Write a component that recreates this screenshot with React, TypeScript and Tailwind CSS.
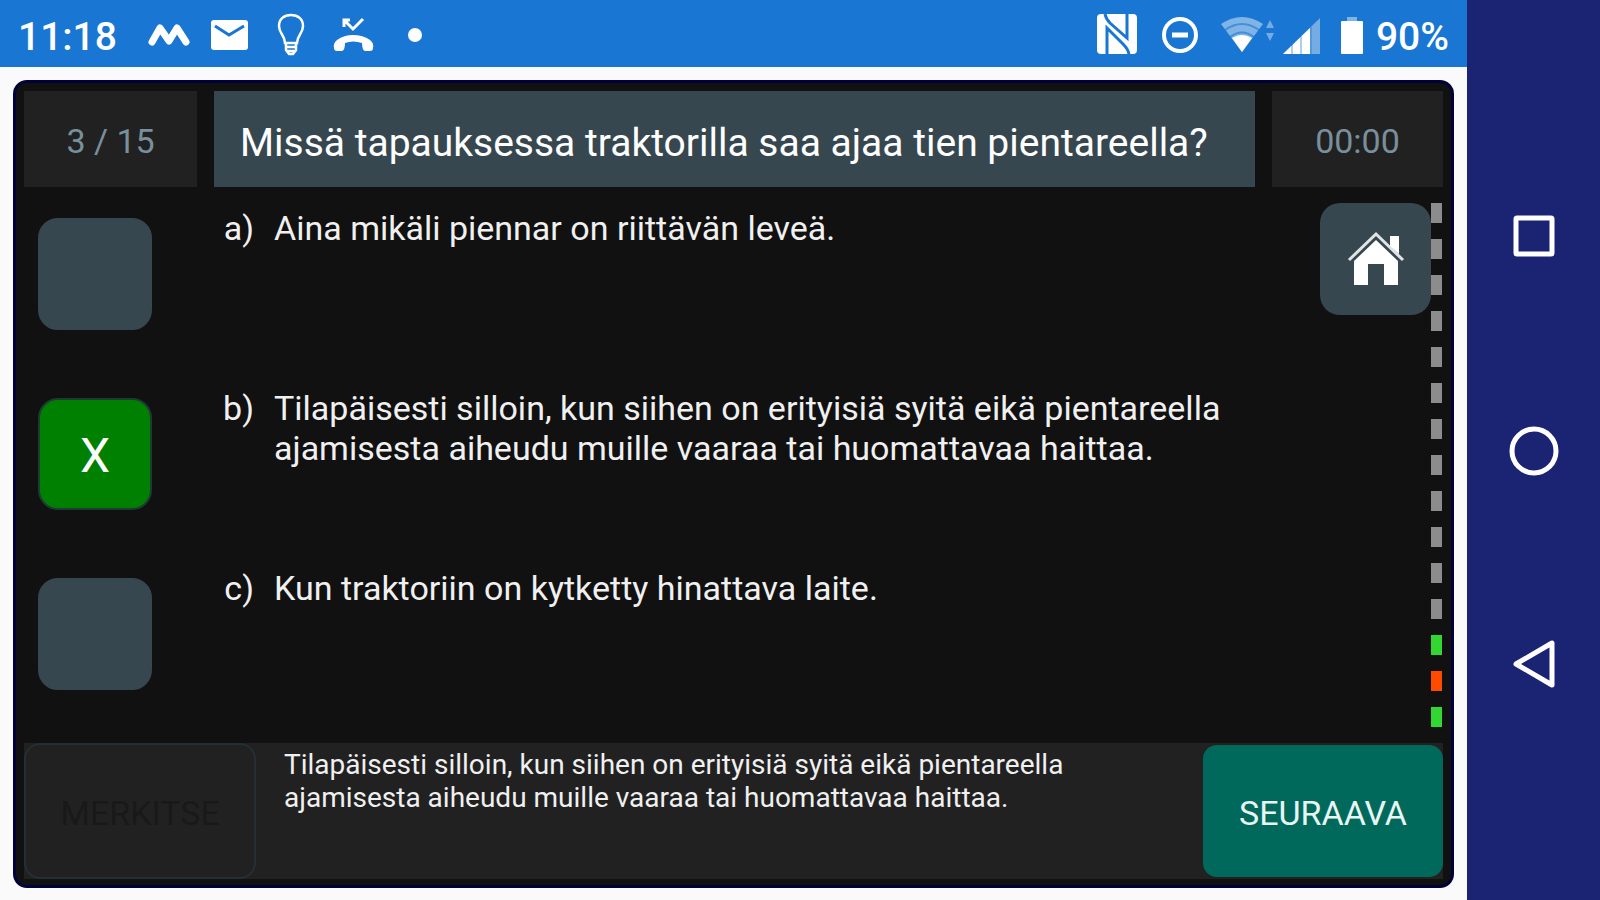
import { useState } from "react";

const QUESTION = "Missä tapauksessa traktorilla saa ajaa tien pientareella?";
const EXPLANATION =
  "Tilapäisesti silloin, kun siihen on erityisiä syitä eikä pientareella ajamisesta aiheudu muille vaaraa tai huomattavaa haittaa.";

const OPTIONS = [
  { key: "a", text: "Aina mikäli piennar on riittävän leveä." },
  {
    key: "b",
    text: "Tilapäisesti silloin, kun siihen on erityisiä syitä eikä pientareella ajamisesta aiheudu muille vaaraa tai huomattavaa haittaa.",
  },
  { key: "c", text: "Kun traktoriin on kytketty hinattava laite." },
];

// first question is at the bottom of the column
const RESULTS = [
  ...Array.from({ length: 12 }, () => "open"),
  "right",
  "wrong",
  "right",
];

const RESULT_COLORS: Record<string, string> = {
  open: "bg-[#8c8c8c]",
  right: "bg-[#32d732]",
  wrong: "bg-[#ff4b00]",
};

const StatusBar = () => (
  <header className="flex h-[67px] items-center justify-between bg-[#1976d2] px-[18px] pt-[2px] text-[39px] leading-[48px] font-medium text-white">
    <div className="flex items-center">
      <span className="w-[120px] pt-1">11:18</span>
      <svg className="w-[61px]" height="48" viewBox="0 0 61 48" fill="none">
        <path
          d="M14 31 L22 17 L31 30 L39 17 L48 31"
          stroke="white"
          strokeWidth="7"
          strokeLinejoin="round"
          strokeLinecap="round"
        />
      </svg>
      <svg className="w-[61px]" height="48" viewBox="0 0 61 48">
        <rect x="12" y="9" width="37" height="30" rx="3" fill="white" />
        <path d="M16 15 L30 24 L45 15" fill="none" stroke="#1976d2" strokeWidth="3" />
      </svg>
      <svg
        className="w-[61px]"
        height="48"
        viewBox="0 0 61 48"
        fill="none"
        stroke="white"
        strokeWidth="2.5"
      >
        <path d="M25 32 C25 24 19 23 19 15 C19 8 24 4 31 4 C38 4 43 8 43 15 C43 23 37 24 37 32 Z" />
        <path d="M26 32 V39 L29 43 H33 L36 39 V32 M26 36 H36 M27 40 H35" />
      </svg>
      <svg className="w-[61px]" height="48" viewBox="0 0 61 48">
        <path
          d="M13 37 Q12 32 16 29 Q23 24 32 24 Q42 24 49 29 Q53 32 52 37 Q52 40 49 40 L44 40 Q41 39 41 32 Q32 29 24 32 Q24 39 21 40 L16 40 Q13 40 13 37 Z"
          fill="white"
        />
        <path d="M23 16 V9 H29 M24 10 L32 18 L42 8" fill="none" stroke="white" strokeWidth="3" />
      </svg>
      <svg className="w-[61px]" height="48" viewBox="0 0 61 48">
        <circle cx="33" cy="24" r="7" fill="white" />
      </svg>
    </div>
    <div className="flex items-center">
      <svg className="w-[63px]" height="48" viewBox="0 0 63 48">
        <rect x="12" y="3" width="40" height="40" rx="4" fill="white" />
        <path
          d="M20 3 Q21 8 25 12 L42 27 V3 M22 43 V17 L38 33 Q43 38 44 43"
          fill="none"
          stroke="#1976d2"
          strokeWidth="3"
        />
      </svg>
      <svg className="w-[63px]" height="48" viewBox="0 0 63 48" fill="none" stroke="white">
        <circle cx="32" cy="24" r="16" strokeWidth="4" />
        <path d="M24 24 H40" strokeWidth="5" />
      </svg>
      <svg className="w-[63px]" height="48" viewBox="0 0 63 48">
        <path d="M10 13 Q31 -1 52 13 L31 41 Z" fill="white" opacity="0.45" />
        <path
          d="M14 19 Q31 7 48 19 M19 26 Q31 17 43 26"
          fill="none"
          stroke="#1976d2"
          strokeWidth="2"
          opacity="0.6"
        />
        <path d="M21 27 Q31 21 41 27 L31 41 Z" fill="white" />
        <path d="M55 17 L59 9 L63 17 Z M55 22 L59 30 L63 22 Z" fill="white" opacity="0.4" />
      </svg>
      <svg className="w-[54px]" height="48" viewBox="0 0 54 48">
        <path d="M9 43 L46 7 V43 Z" fill="white" opacity="0.4" />
        <path d="M9 43 L36 17 V43 Z" fill="white" />
        <path
          d="M18 43 V33 M27 43 V25 M37 43 V16"
          stroke="#1976d2"
          strokeWidth="2"
          opacity="0.35"
        />
      </svg>
      <svg className="w-[48px]" height="48" viewBox="0 0 48 48">
        <path d="M19 6 H29 V10 H19 Z" fill="white" opacity="0.45" />
        <rect x="13" y="10" width="22" height="33" rx="1" fill="white" />
      </svg>
      <span className="pt-1">90%</span>
    </div>
  </header>
);

const NavBar = () => (
  <nav className="flex w-[133px] shrink-0 flex-col items-center justify-center gap-[150px] bg-[#1a2473]">
    <button aria-label="Recent apps" className="size-16">
      <svg viewBox="0 0 64 64" fill="none" stroke="white" strokeWidth="5">
        <rect x="14" y="14" width="36" height="36" rx="1" />
      </svg>
    </button>
    <button aria-label="Home screen" className="size-16">
      <svg viewBox="0 0 64 64" fill="none" stroke="white" strokeWidth="5">
        <circle cx="32" cy="33" r="22" />
      </svg>
    </button>
    <button aria-label="Back" className="size-16">
      <svg viewBox="0 0 64 64" fill="none" stroke="white" strokeWidth="5" strokeLinejoin="round">
        <path d="M14 32 L50 11 V53 Z" />
      </svg>
    </button>
  </nav>
);

const HomeIcon = () => (
  <svg width="60" height="60" viewBox="0 0 60 60" fill="none">
    <path d="M3 33 L30 7 L57 33" stroke="white" strokeOpacity="0.85" strokeWidth="3" />
    <path d="M44 9 H53 V27 L44 19 Z" fill="white" />
    <path d="M8 34 L30 13 L52 34 V58 H38 V37 H22 V58 H8 Z" fill="white" />
  </svg>
);

interface OptionProps {
  label: string;
  text: string;
  checked: boolean;
  onSelect: () => void;
}

const Option = ({ label, text, checked, onSelect }: OptionProps) => (
  <li className="flex">
    <div className="relative mt-[15px] ml-[14px] h-[112px] w-[114px] shrink-0">
      <input
        type="checkbox"
        id={`option-${label}`}
        checked={checked}
        onChange={onSelect}
        className="size-full appearance-none rounded-[20px] border-2 border-[#37474f] bg-[#37474f] checked:border-[#1d3a33] checked:bg-[#008000]"
      />
      {checked ? (
        <span className="pointer-events-none absolute inset-0 flex items-center justify-center pt-1 text-[48px] text-white">
          X
        </span>
      ) : null}
    </div>
    <label
      htmlFor={`option-${label}`}
      className="flex pt-[5px] text-[34px] leading-[40px] text-[#f0f0f0]"
    >
      <span className="w-[122px] shrink-0 pr-5 text-right">{label})</span>
      <span className="max-w-[960px]">{text}</span>
    </label>
  </li>
);

const App = () => {
  const [selected, setSelected] = useState("b");

  return (
    <div className="flex min-h-screen bg-[#fafafa] font-['Roboto',sans-serif]">
      <div className="flex min-w-0 flex-1 flex-col">
        <StatusBar />

        <main className="m-[13px] mb-[12px] flex flex-1 flex-col rounded-[14px] border-3 border-[#02023a] bg-[#111111] px-[8px] pt-[8px] pb-[6px]">
          <div className="grid h-[96px] grid-cols-[173px_1fr_171px] gap-[17px] text-[34px] text-[#78909c]">
            <div className="flex items-center justify-center bg-[#212121] pt-1">3 / 15</div>
            <h1 className="flex items-center bg-[#37474f] pt-2 pl-[26px] text-[39px] text-white">
              {QUESTION}
            </h1>
            <div className="flex items-center justify-center bg-[#212121] pt-1">00:00</div>
          </div>

          <div className="flex flex-1 pt-4">
            <ul className="grid flex-1 grid-rows-3">
              {OPTIONS.map((option) => (
                <Option
                  key={option.key}
                  label={option.key}
                  text={option.text}
                  checked={selected === option.key}
                  onSelect={() => setSelected(option.key)}
                />
              ))}
            </ul>
            <button
              aria-label="Etusivu"
              className="flex h-[112px] w-[111px] items-center justify-center rounded-[20px] bg-[#37474f] pb-1"
            >
              <HomeIcon />
            </button>
            <div className="mr-[1px] flex flex-col justify-between pb-4">
              {RESULTS.map((result, i) => (
                <span key={i} className={`h-5 w-[11px] ${RESULT_COLORS[result]}`} />
              ))}
            </div>
          </div>

          <div className="flex h-[136px] items-stretch bg-[#212121] text-[34px]">
            <button
              disabled
              className="w-[232px] rounded-[16px] border-2 border-[#232f34] pt-1 text-[#191919]"
            >
              MERKITSE
            </button>
            <p className="flex-1 px-[28px] pt-[5px] text-[28px] leading-[33px] text-[#f0f0f0]">
              <span className="block max-w-[800px]">{EXPLANATION}</span>
            </p>
            <button className="my-[2px] w-[240px] rounded-[14px] bg-[#00695c] pt-1 text-[#e8f5f3]">
              SEURAAVA
            </button>
          </div>
        </main>
      </div>
      <NavBar />
    </div>
  );
};

export default App;
